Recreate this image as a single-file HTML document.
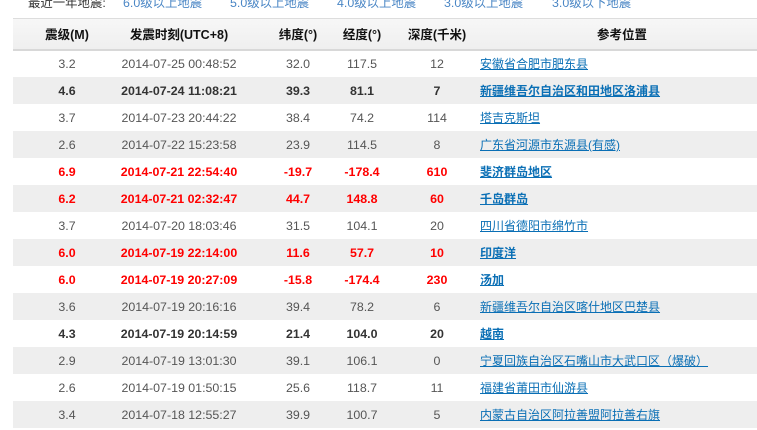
<!DOCTYPE html>
<html><head><meta charset="utf-8"><style>
*{margin:0;padding:0;box-sizing:border-box}
body{width:757px;height:421px;overflow:hidden;background:#fff;font-family:"Liberation Sans","Noto Sans CJK SC",sans-serif;font-size:12.4px;position:relative}
.top{position:absolute;top:-4px;left:0;height:20px;line-height:14px;color:#333;white-space:nowrap}
.top span{position:absolute;top:0}
.top a{color:#4a86c5;text-decoration:none}
.hdr{position:absolute;left:13px;top:18px;width:744px;height:33px;background:linear-gradient(#f7f7f7,#efefef);border-top:1px solid #ddd;border-bottom:2px solid #d8d8d8}
.row{position:absolute;left:13px;width:744px;height:27px}
.row.s{background:#eeeeee}
.c{position:absolute;width:120px;text-align:center;line-height:29px;white-space:nowrap;color:#555}
.hdr .c{line-height:33px;font-weight:bold;color:#111;font-size:12.5px}
.loc{position:absolute;left:467px;line-height:28px;white-space:nowrap;font-size:12px}
.loc a{color:#0a6fb5;text-decoration:underline}
.b .c{font-weight:bold;color:#333}
.b .loc a{font-weight:bold}
.r .c{font-weight:bold;color:#f00}
.r .loc a{font-weight:bold}
</style></head><body>
<div class="top"><span style="left:28px">最近一年地震:</span><span style="left:123px"><a>6.0级以上地震</a></span><span style="left:230px"><a>5.0级以上地震</a></span><span style="left:337px"><a>4.0级以上地震</a></span><span style="left:444px"><a>3.0级以上地震</a></span><span style="left:552px"><a>3.0级以下地震</a></span></div>
<div class="hdr">
<div class="c" style="left:-6px">震级(M)</div>
<div class="c" style="left:106px">发震时刻(UTC+8)</div>
<div class="c" style="left:225px">纬度(°)</div>
<div class="c" style="left:289px">经度(°)</div>
<div class="c" style="left:364px">深度(千米)</div>
<div class="c" style="left:549px">参考位置</div>
</div>
<div id="rows"></div>
<script>
var d=[
["3.2","2014-07-25 00:48:52","32.0","117.5","12","安徽省合肥市肥东县",""],
["4.6","2014-07-24 11:08:21","39.3","81.1","7","新疆维吾尔自治区和田地区洛浦县","b"],
["3.7","2014-07-23 20:44:22","38.4","74.2","114","塔吉克斯坦",""],
["2.6","2014-07-22 15:23:58","23.9","114.5","8","广东省河源市东源县(有感)",""],
["6.9","2014-07-21 22:54:40","-19.7","-178.4","610","斐济群岛地区","r"],
["6.2","2014-07-21 02:32:47","44.7","148.8","60","千岛群岛","r"],
["3.7","2014-07-20 18:03:46","31.5","104.1","20","四川省德阳市绵竹市",""],
["6.0","2014-07-19 22:14:00","11.6","57.7","10","印度洋","r"],
["6.0","2014-07-19 20:27:09","-15.8","-174.4","230","汤加","r"],
["3.6","2014-07-19 20:16:16","39.4","78.2","6","新疆维吾尔自治区喀什地区巴楚县",""],
["4.3","2014-07-19 20:14:59","21.4","104.0","20","越南","b"],
["2.9","2014-07-19 13:01:30","39.1","106.1","0","宁夏回族自治区石嘴山市大武口区（爆破）",""],
["2.6","2014-07-19 01:50:15","25.6","118.7","11","福建省莆田市仙游县",""],
["3.4","2014-07-18 12:55:27","39.9","100.7","5","内蒙古自治区阿拉善盟阿拉善右旗",""]];
var h="";
d.forEach(function(r,i){
h+='<div class="row '+(i%2?'s ':'')+r[6]+'" style="top:'+(50+i*27)+'px">'+
'<div class="c" style="left:-6px">'+r[0]+'</div>'+
'<div class="c" style="left:106px">'+r[1]+'</div>'+
'<div class="c" style="left:225px">'+r[2]+'</div>'+
'<div class="c" style="left:289px">'+r[3]+'</div>'+
'<div class="c" style="left:364px">'+r[4]+'</div>'+
'<div class="loc"><a>'+r[5]+'</a></div></div>';
});
document.getElementById("rows").innerHTML=h;
</script>
</body></html>
